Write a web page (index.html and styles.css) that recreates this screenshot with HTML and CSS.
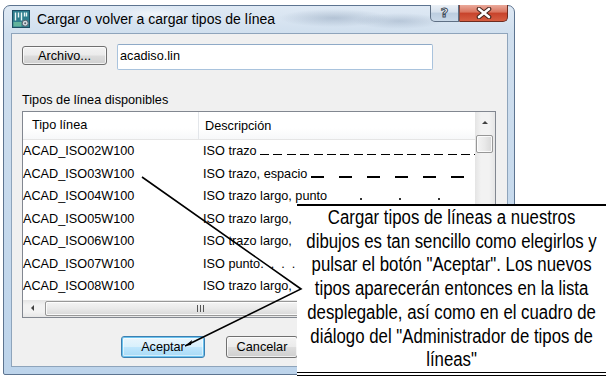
FILE: index.html
```html
<!DOCTYPE html>
<html lang="es">
<head>
    <meta charset="UTF-8">
    <title>Cargar o volver a cargar tipos de línea</title>
    <link rel="stylesheet" href="styles.css">
</head>
<body>

<div class="window">
    <div class="titlebar">
        <svg class="app-icon" width="18" height="18" viewBox="0 0 18 18">
            <rect x="0.5" y="0.5" width="17" height="17" fill="#2f7e8e" stroke="#1d4d63"/>
            <path d="M3.5 2.5v8M6.5 2.5v5M9.5 2.5v8M12.5 2.5v4M14.5 2.5v4" stroke="#eaf6f5" stroke-width="1.4"/>
            <rect x="1.5" y="12" width="8" height="4.5" fill="#62b39c"/>
            <circle cx="13.2" cy="13.2" r="3" fill="#d3dbe2" stroke="#55616c"/>
            <circle cx="13.2" cy="13.2" r="1" fill="#55616c"/>
        </svg>
        <span class="title">Cargar o volver a cargar tipos de línea</span>
        <div class="caption">
            <div class="cap-btn help"><span>?</span></div>
            <div class="cap-btn close">
                <svg width="18" height="12" viewBox="0 0 18 12">
                    <path d="M4 2 L14 10 M14 2 L4 10" stroke="#43231c" stroke-width="4.6" stroke-linecap="round"/>
                    <path d="M4 2 L14 10 M14 2 L4 10" stroke="#fff" stroke-width="2.6" stroke-linecap="round"/>
                </svg>
            </div>
        </div>
    </div>

    <div class="panel">
        <div class="file-row">
            <button class="btn file-btn">Archivo...</button>
            <div class="file-input">acadiso.lin</div>
        </div>

        <div class="list-label">Tipos de línea disponibles</div>

        <div class="list">
            <div class="list-view">
                <div class="list-head">
                    <div class="col-name">Tipo línea</div>
                    <div class="col-desc">Descripción</div>
                </div>
                <div class="row">
                    <div class="col-name">ACAD_ISO02W100</div>
                    <div class="col-desc">ISO trazo <span class="pattern dash-a"></span></div>
                </div>
                <div class="row">
                    <div class="col-name">ACAD_ISO03W100</div>
                    <div class="col-desc">ISO trazo, espacio <span class="pattern dash-b"></span></div>
                </div>
                <div class="row">
                    <div class="col-name">ACAD_ISO04W100</div>
                    <div class="col-desc">ISO trazo largo, punto <span class="pattern dots"></span></div>
                </div>
                <div class="row">
                    <div class="col-name">ACAD_ISO05W100</div>
                    <div class="col-desc">ISO trazo largo,</div>
                </div>
                <div class="row">
                    <div class="col-name">ACAD_ISO06W100</div>
                    <div class="col-desc">ISO trazo largo,</div>
                </div>
                <div class="row">
                    <div class="col-name">ACAD_ISO07W100</div>
                    <div class="col-desc">ISO punto. &nbsp;. &nbsp;. &nbsp;. &nbsp;.</div>
                </div>
                <div class="row">
                    <div class="col-name">ACAD_ISO08W100</div>
                    <div class="col-desc">ISO trazo largo,</div>
                </div>
            </div>

            <div class="vscroll">
                <div class="arrow up"></div>
                <div class="thumb v-thumb"></div>
            </div>
            <div class="hscroll">
                <div class="arrow left"></div>
                <div class="thumb h-thumb"><span class="grip"></span></div>
            </div>
            <div class="corner"></div>
        </div>

        <div class="actions">
            <button class="btn default">Aceptar</button>
            <button class="btn cancel">Cancelar</button>
        </div>
    </div>
</div>

<!-- nota explicativa encima del dialogo -->
<div class="callout">
    <div class="callout-text">
        Cargar tipos de líneas a nuestros<br>
        dibujos es tan sencillo como elegirlos y<br>
        pulsar el botón "Aceptar". Los nuevos<br>
        tipos aparecerán entonces en la lista<br>
        desplegable, así como en el cuadro de<br>
        diálogo del "Administrador de tipos de<br>
        líneas"
    </div>
</div>

<svg class="pointer" width="610" height="384" viewBox="0 0 610 384">
    <path d="M142 177 L301 289 L185 346" fill="none" stroke="#000" stroke-width="1.6" stroke-linejoin="miter"/>
    <path d="M185 346 L192 340 L191 345 Z" fill="#000"/>
</svg>

</body>
</html>
```

FILE: styles.css
```css
body {
    margin: 0;
    width: 610px;
    height: 384px;
    background: #fff;
    position: relative;
    overflow: hidden;
    font-family: "Liberation Sans", Arial, sans-serif;
    font-size: 12.7px;
    color: #000;
}

/* marco de la ventana (estilo Aero) */
.window {
    margin: 5px 0 0 3px;
    width: 512px;
    height: 370px;
    box-sizing: border-box;
    border: 1px solid #5d7490;
    border-radius: 7px 7px 2px 2px;
    padding: 0 6px 7px 7px;
    display: flex;
    flex-direction: column;
    background:
        radial-gradient(ellipse 55px 9px at 330px 12px, rgba(110, 132, 160, 0.35), transparent),
        radial-gradient(ellipse 45px 8px at 395px 15px, rgba(110, 132, 160, 0.3), transparent),
        radial-gradient(ellipse 40px 7px at 150px 8px, rgba(255, 255, 255, 0.6), transparent),
        linear-gradient(to bottom, #dfe9f4 0, #d0dfee 28px, #bdd4eb 100%);
}

.titlebar {
    height: 27px;
    display: flex;
    align-items: flex-start;
}

.app-icon {
    margin: 4px 0 0 1px;
    flex: none;
}

.title {
    margin-left: 7px;
    font-size: 14px;
    line-height: 27px;
    color: #000;
}

.caption {
    margin-left: auto;
    margin-top: -1px;
    display: flex;
}

.cap-btn {
    height: 17px;
    box-sizing: border-box;
    display: flex;
    align-items: center;
    justify-content: center;
}

.help {
    width: 29px;
    border: 1px solid #5e6f84;
    border-top: none;
    border-radius: 0 0 0 5px;
    background: linear-gradient(to bottom, #eaf0f6 0, #d5e0ec 45%, #bccddf 50%, #c9d8e8 100%);
}

.help span {
    font-family: "DejaVu Sans", sans-serif;
    font-weight: bold;
    font-size: 13px;
    color: #fff;
    -webkit-text-stroke: 1px #3f4d5c;
    line-height: 16px;
}

.close {
    width: 49px;
    border: 1px solid #6d2c21;
    border-left: 1px solid #8a4a3f;
    border-top: none;
    border-radius: 0 0 5px 0;
    background: linear-gradient(to bottom, #eaaa9b 0, #d9745e 45%, #c7422b 50%, #d65e42 100%);
}

/* panel interior */
.panel {
    flex: 1;
    border: 1px solid #8ea4bb;
    background: #f0f0f0;
    padding: 10px 10px 8px 10px;
}

.file-row {
    display: flex;
    align-items: flex-start;
    gap: 10px;
}

.btn {
    box-sizing: border-box;
    height: 22px;
    padding: 0;
    border: 1px solid #707070;
    border-radius: 3px;
    background: linear-gradient(to bottom, #f3f3f3 0, #ebebeb 48%, #dddddd 52%, #cfcfcf 100%);
    box-shadow: inset 0 0 0 1px rgba(255, 255, 255, 0.7);
    font-family: inherit;
    font-size: 12.7px;
    color: #000;
}

.file-btn {
    width: 85px;
    height: 19px;
    margin-top: 2px;
    line-height: 16px;
}

.file-input {
    width: 316px;
    height: 26px;
    box-sizing: border-box;
    border: 1px solid #a9c3dd;
    border-top-color: #8faac7;
    border-radius: 2px;
    background: #fff;
    padding: 3px 2px;
    line-height: 16px;
}

.list-label {
    margin-top: 22px;
    margin-bottom: 3px;
    line-height: 16px;
}

/* lista de tipos de linea */
.list {
    width: 474px;
    height: 207px;
    box-sizing: border-box;
    border: 1px solid #828790;
    background: #fff;
    display: grid;
    grid-template-columns: 1fr 20px;
    grid-template-rows: 1fr 17px;
}

.list-view {
    overflow: hidden;
    white-space: nowrap;
}

.list-head {
    height: 28px;
    box-sizing: border-box;
    display: flex;
    align-items: center;
    border-bottom: 1px solid #e5e5e5;
    background: linear-gradient(to bottom, #fff 0, #fff 60%, #f7f8f9 100%);
}

.list-head .col-name {
    width: 176px;
    box-sizing: border-box;
    padding-left: 9px;
    border-right: 1px solid #e3e6ea;
    line-height: 27px;
}

.list-head .col-desc {
    padding-left: 6px;
}

.row {
    height: 22.5px;
    display: flex;
    align-items: center;
}

.row .col-name {
    width: 176px;
    flex: none;
}

.row .col-desc {
    padding-left: 4px;
}

.pattern {
    display: inline-block;
    height: 1.5px;
    vertical-align: baseline;
}

.dash-a {
    width: 215px;
    background: repeating-linear-gradient(to right, #000 0 9px, transparent 9px 13.4px);
}

.dash-b {
    width: 160px;
    background: repeating-linear-gradient(to right, #000 0 13px, transparent 13px 28px);
}

.dots {
    width: 150px;
    height: 2px;
    background: repeating-linear-gradient(to right, transparent 0 29px, #333 29px 31px, transparent 31px 39px);
}

/* barras de desplazamiento */
.vscroll {
    background: linear-gradient(to right, #e4e4e4 0, #f2f2f2 30%, #f2f2f2 70%, #e6e6e6 100%);
}

.hscroll {
    display: flex;
    background: linear-gradient(to bottom, #e4e4e4 0, #f2f2f2 30%, #f2f2f2 70%, #e6e6e6 100%);
}

.corner {
    background: #f0f0f0;
}

.arrow {
    position: relative;
}

.arrow.up {
    height: 21px;
}

.arrow.left {
    width: 20px;
    flex: none;
}

.arrow.up::after {
    content: "";
    position: absolute;
    left: 7px;
    top: 9px;
    border-left: 3px solid transparent;
    border-right: 3px solid transparent;
    border-bottom: 3px solid #404040;
}

.arrow.left::after {
    content: "";
    position: absolute;
    left: 8px;
    top: 5px;
    border-top: 3px solid transparent;
    border-bottom: 3px solid transparent;
    border-right: 3px solid #404040;
}

.thumb {
    box-sizing: border-box;
    border: 1px solid #979797;
    border-radius: 2px;
    box-shadow: inset 0 0 0 1px rgba(255, 255, 255, 0.8);
}

.v-thumb {
    margin: 2px 0 0 1px;
    width: 17px;
    height: 18px;
    background: linear-gradient(to right, #f4f4f4 0, #e9e9e9 50%, #d8d8d8 100%);
}

.h-thumb {
    margin: 1px 0 0 2px;
    width: 310px;
    height: 15px;
    display: flex;
    align-items: center;
    justify-content: center;
    background: linear-gradient(to bottom, #f4f4f4 0, #e9e9e9 50%, #d8d8d8 100%);
}

.grip {
    width: 7px;
    height: 7px;
    background: repeating-linear-gradient(to right, #555 0 1px, transparent 1px 3px);
}

/* botones inferiores */
.actions {
    margin-top: 18px;
    padding-left: 99px;
    display: flex;
    gap: 21px;
}

.default {
    width: 84px;
    border-color: #3c7fb1;
    background: linear-gradient(to bottom, #eaf6fd 0, #d9f0fc 48%, #bee6fd 52%, #a7d9f5 100%);
    box-shadow: inset 0 0 0 1px #6cc3ee, inset 0 0 0 2px rgba(255, 255, 255, 0.5);
}

.cancel {
    width: 72px;
}

/* nota */
.callout {
    position: absolute;
    left: 297px;
    top: 204px;
    width: 309px;
    height: 172px;
    box-sizing: border-box;
    background: #fff;
    border-top: 2px solid #000;
    border-bottom: 4px double #000;
    overflow: hidden;
}

/* el texto original es estrecho: se comprime en horizontal */
.callout-text {
    width: 368px;
    transform: scaleX(0.84);
    transform-origin: left top;
    text-align: center;
    white-space: nowrap;
    font-family: "Liberation Sans", Arial, sans-serif;
    font-size: 20px;
    line-height: 23.7px;
    color: #000;
}

.pointer {
    position: absolute;
    left: 0;
    top: 0;
    pointer-events: none;
}
```
